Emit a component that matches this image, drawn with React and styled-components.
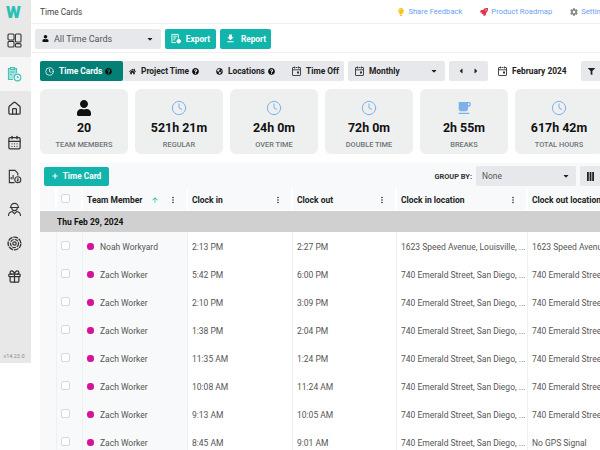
import React from 'react';
import styled, { createGlobalStyle } from 'styled-components';
import { FaUser, FaHome, FaGlobeAmericas, FaQuestionCircle, FaLightbulb, FaRocket, FaCog, FaFilter, FaCaretDown, FaCaretLeft, FaCaretRight, FaPlus } from 'react-icons/fa';
import { MdFreeBreakfast, MdFileDownload, MdMoreVert, MdArrowUpward } from 'react-icons/md';
import { LuClock, LuHouse, LuCalendarDays, LuGift } from 'react-icons/lu';

const GlobalStyle = createGlobalStyle`
  html, body {
    margin: 0;
    width: 600px;
    height: 450px;
    overflow: hidden;
    background: #fff;
    font-family: Roboto, "Liberation Sans", sans-serif;
  }
  * { box-sizing: border-box; }
`;

const Page = styled.div`
  display: flex;
  width: 600px;
  height: 450px;
  overflow: hidden;
  align-items: flex-start;
`;

const Sidebar = styled.aside`
  flex: 0 0 31px;
  height: 363px;
  background: #e8e8e8;
  display: flex;
  flex-direction: column;
`;

const Logo = styled.div`
  height: 24px;
  display: flex;
  align-items: center;
  justify-content: center;
  padding-right: 4px;
  font-size: 17px;
  font-weight: 900;
  color: #2cc0b4;
`;

const NavItem = styled.div`
  height: ${p => p.$h || 33}px;
  display: flex;
  align-items: center;
  justify-content: center;
  padding-right: 3px;
  background: ${p => (p.$active ? '#f6f6f6' : 'transparent')};
  color: #333;
  font-size: 15px;
`;

const Version = styled.div`
  margin-top: auto;
  padding: 0 3px 4px 0;
  text-align: center;
  font-size: 5.5px;
  color: #8a8a8a;
`;

const Main = styled.main`
  flex: 0 0 569px;
  min-width: 0;
  display: flex;
  flex-direction: column;
`;

const Header = styled.header`
  height: 24px;
  display: flex;
  align-items: center;
  padding-left: 9px;
  border-bottom: 1px solid #f0f0f0;
  font-size: 8.3px;
  color: #444;
`;

const HeaderLinks = styled.div`
  margin-left: auto;
  display: flex;
  gap: 18px;
  white-space: nowrap;
  margin-right: -9px;
  font-size: 7.6px;
`;

const HeaderLink = styled.span`
  display: flex;
  align-items: center;
  gap: 3px;
  color: #6b9ff0;
  svg { color: ${p => p.$icon}; font-size: 8px; }
`;

const Toolbar = styled.div`
  height: 29px;
  display: flex;
  align-items: center;
  gap: 4px;
  padding: 1px 0 0 4px;
  border-bottom: 1px solid #f0f0f0;
`;

const Select = styled.div`
  width: ${p => p.$w}px;
  height: 20px;
  flex: none;
  display: flex;
  align-items: center;
  gap: 5px;
  padding: 0 ${p => p.$pad || 7}px;
  background: #e6e8ec;
  border-radius: 2px;
  font-size: ${p => p.$size || 8.4}px;
  color: ${p => p.$color || '#555'};
  font-weight: ${p => p.$weight || 400};
  svg { flex: none; }
`;

const Caret = styled(FaCaretDown)`
  margin-left: auto;
  font-size: 8px;
  color: #222;
`;

const TealButton = styled.button`
  height: ${p => p.$h || 20}px;
  width: ${p => p.$w}px;
  display: flex;
  flex: none;
  align-items: center;
  justify-content: center;
  gap: 5px;
  border: 0;
  padding: 0;
  border-radius: 2px;
  background: #12b5ab;
  color: #fff;
  font-family: inherit;
  font-size: 8.3px;
  font-weight: 700;
`;

const TabRow = styled.div`
  display: flex;
  align-items: center;
  gap: 4px;
  padding: 8px 0 0 9px;
  white-space: nowrap;
`;

const Tabs = styled.div`
  display: flex;
  width: 304px;
  height: 20px;
  flex: none;
  background: #e6e8ec;
  border-radius: 2px;
`;

const Tab = styled.div`
  width: ${p => p.$w}px;
  display: flex;
  align-items: center;
  gap: 5px;
  padding-left: ${p => (p.$active ? 5 : 6)}px;
  background: ${p => (p.$active ? '#047f76' : 'transparent')};
  color: ${p => (p.$active ? '#fff' : '#222')};
  font-size: 8.4px;
  font-weight: 700;
  border-radius: 2px;
`;

const Help = styled(FaQuestionCircle)`
  flex: none;
  margin-left: -2px;
  font-size: 7px;
  color: #111;
`;

const Pager = styled.div`
  width: 39px;
  height: 20px;
  flex: none;
  display: flex;
  align-items: center;
  justify-content: space-around;
  padding: 0 4px;
  background: #e6e8ec;
  border-radius: 2px;
  font-size: 8px;
  color: #222;
`;

const Month = styled.div`
  width: 85px;
  flex: none;
  display: flex;
  align-items: center;
  gap: 5px;
  padding-left: 6px;
  font-size: 8.4px;
  font-weight: 700;
  color: #222;
`;

const Cards = styled.div`
  display: flex;
  gap: 7px;
  padding: 8px 0 0 9px;
`;

const Card = styled.div`
  flex: 0 0 88px;
  height: 65px;
  display: flex;
  flex-direction: column;
  align-items: center;
  padding-top: 10px;
  background: #eeefef;
  border-radius: 6px;
`;

const CardIcon = styled.div`
  height: 17px;
  display: flex;
  align-items: center;
  font-size: 16px;
  color: ${p => p.$color || '#7fb0ea'};
`;

const CardValue = styled.div`
  margin-top: 4px;
  font-size: 12.4px;
  line-height: 15px;
  font-weight: 700;
  color: #111;
  white-space: nowrap;
`;

const CardLabel = styled.div`
  margin-top: 5px;
  font-size: 7.4px;
  line-height: 9px;
  font-weight: 500;
  color: #6f747a;
`;

const TableWrap = styled.section`
  margin: 9px 0 0 9px;
  width: 600px;
`;

const TableBar = styled.div`
  height: 26px;
  display: flex;
  align-items: center;
  padding-left: 4px;
  background: #f8f9fa;
`;

const GroupBy = styled.div`
  margin-left: auto;
  display: flex;
  align-items: center;
  gap: 4px;
  font-size: 7.4px;
  font-weight: 700;
  color: #333;
  padding-right: 30px;
`;

const COLUMNS = '17px 26px 105px 105px 104px 131px 112px';

const Row = styled.div`
  display: grid;
  grid-template-columns: ${COLUMNS};
  height: ${p => p.$h || 28}px;
`;

const Cell = styled.div`
  display: flex;
  align-items: center;
  padding: 1px 5px 0 4px;
  min-width: 0;
  overflow: hidden;
  white-space: nowrap;
  font-size: 8.5px;
  color: #555;
  background: ${p => (p.$pinned ? '#f8f9fa' : '#fff')};
  border-right: ${p => (p.$line ? '1px solid #eef0f2' : 'none')};
`;

const HeadCell = styled(Cell)`
  padding: 1px 8px 0 4px;
  font-weight: 700;
  color: #222;
  background: #f8f9fa;
  border-right: 2px solid #fff;
  svg:last-child { margin-left: auto; font-size: 10px; color: #222; }
`;

const Sort = styled(MdArrowUpward)`
  margin-left: 9px;
  font-size: 8px;
  color: #12b5ab;
`;

const GroupRow = styled.div`
  height: 21px;
  margin-top: 1px;
  display: flex;
  align-items: center;
  padding-left: 17px;
  background: #d0d0d0;
  font-size: 8.5px;
  font-weight: 700;
  color: #111;
`;

const Checkbox = styled.span`
  width: 9px;
  height: 9px;
  margin: -3px 0 0 0;
  border: 1px solid #d8d8d8;
  border-radius: 2px;
  background: #fff;
`;

const Dot = styled.span`
  flex: none;
  width: 6.5px;
  height: 6.5px;
  margin-right: 6.5px;
  border-radius: 50%;
  background: #d6129a;
`;

const LOC_A = '1623 Speed Avenue, Louisville, ...';
const LOC_B = '740 Emerald Street, San Diego, ...';

const rows = [
  ['Noah Workyard', '2:13 PM', '2:27 PM', LOC_A, LOC_A],
  ['Zach Worker', '5:42 PM', '6:00 PM', LOC_B, LOC_B],
  ['Zach Worker', '2:10 PM', '3:09 PM', LOC_B, LOC_B],
  ['Zach Worker', '1:38 PM', '2:04 PM', LOC_B, LOC_B],
  ['Zach Worker', '11:35 AM', '1:24 PM', LOC_B, LOC_B],
  ['Zach Worker', '10:08 AM', '11:24 AM', LOC_B, LOC_B],
  ['Zach Worker', '9:13 AM', '10:05 AM', LOC_B, LOC_B],
  ['Zach Worker', '8:45 AM', '9:01 AM', LOC_B, 'No GPS Signal'],
];

const stats = [
  { value: '20', label: 'TEAM MEMBERS', icon: <FaUser />, color: '#111' },
  { value: '521h 21m', label: 'REGULAR', icon: <LuClock strokeWidth={1.5} /> },
  { value: '24h 0m', label: 'OVER TIME', icon: <LuClock strokeWidth={1.5} /> },
  { value: '72h 0m', label: 'DOUBLE TIME', icon: <LuClock strokeWidth={1.5} /> },
  { value: '2h 55m', label: 'BREAKS', icon: <MdFreeBreakfast /> },
  { value: '617h 42m', label: 'TOTAL HOURS', icon: <LuClock strokeWidth={1.5} /> },
];

const DashboardIcon = () => (
  <svg width="15" height="15" viewBox="0 0 15 15" fill="none" stroke="#333" strokeWidth="1.1">
    <rect x="1" y="1" width="6" height="6" rx="1" />
    <rect x="1" y="8.4" width="6" height="5.6" rx="1" />
    <rect x="8.4" y="1" width="5.6" height="8" rx="1" />
    <rect x="8.4" y="10.6" width="5.6" height="3.4" rx="1" />
  </svg>
);

// small worker with a hard hat
const WorkerIcon = () => (
  <svg width="15" height="15" viewBox="0 0 16 16" fill="none" stroke="#333" strokeWidth="1.2">
    <path d="M4 5.4a4 4 0 0 1 8 0M3 5.8h10M5 6.2c0 4 6 4 6 0M1.6 15c0-3 2.2-4.6 4-4.8L8 12.5l2.4-2.3c1.8.2 4 1.8 4 4.8" />
  </svg>
);

const TargetIcon = () => (
  <svg width="15" height="15" viewBox="0 0 16 16" fill="none" stroke="#333">
    <circle cx="8" cy="8" r="6.8" strokeWidth="1.5" strokeDasharray="5 1" />
    <circle cx="8" cy="8" r="4.3" strokeWidth="1.3" strokeDasharray="4 1" />
    <circle cx="8" cy="8" r="1.8" strokeWidth="1.3" />
  </svg>
);

const ClipboardClockIcon = () => (
  <svg width="16" height="16" viewBox="0 0 16 16" fill="#a9e3de" stroke="#45c4ba" strokeWidth="1.2">
    <path d="M7 13.5H2.5v-11h8V7" />
    <path d="M4.5 1.5h4v2h-4z" />
    <path d="M4 6h5M4 8.5h2" fill="none" />
    <circle cx="11.5" cy="11.5" r="3.3" fill="#f6f6f6" />
    <path d="M11.5 10v1.6h1.4" fill="none" />
  </svg>
);

const ExpenseIcon = () => (
  <svg width="15" height="15" viewBox="0 0 16 16" fill="none" stroke="#333" strokeWidth="1.2">
    <path d="M8 14.5H2.5V1.5h6l3 3V7" />
    <path d="M4.5 11V8.5M6.5 11V6.5" />
    <circle cx="11.5" cy="11.5" r="3.2" />
    <path d="M11.5 9.8v3.4M10.5 12.4h1.5M11 10.6h1.5" />
  </svg>
);

const ExportIcon = () => (
  <svg width="10" height="11" viewBox="0 0 11 12" fill="none" stroke="#fff" strokeWidth="1">
    <path d="M5.5 10.5H1V1.5h7V6" />
    <path d="M2.5 3.5h4M2.5 5.5h3M2.5 7.5h2" />
    <circle cx="8.5" cy="9" r="2" fill="#fff" />
  </svg>
);

const CalendarIcon = () => (
  <svg width="9" height="10" viewBox="0 0 9 10" fill="none" stroke="#333" strokeWidth="0.9">
    <path d="M2.5 1.5H1a.5.5 0 0 0-.5.5v7a.5.5 0 0 0 .5.5h7a.5.5 0 0 0 .5-.5V2a.5.5 0 0 0-.5-.5H6.5M2.5.5v2M6.5.5v2M3.5 1.5h2M.5 3.8h8" />
    <rect x="5" y="5.5" width="2" height="2" fill="#333" stroke="none" />
  </svg>
);

const ColumnsIcon = () => (
  <svg width="7" height="9" viewBox="0 0 7 9" fill="#222">
    <rect x="0" y="0" width="1.8" height="9" />
    <rect x="2.6" y="0" width="1.8" height="9" />
    <rect x="5.2" y="0" width="1.8" height="9" />
  </svg>
);

const App = () => {
  return (
    <Page>
      <GlobalStyle />
      <Sidebar>
        <Logo>W</Logo>
        <NavItem><DashboardIcon /></NavItem>
        <NavItem $h={34} $active><ClipboardClockIcon /></NavItem>
        <NavItem $h={34}><LuHouse /></NavItem>
        <NavItem $h={34}><LuCalendarDays /></NavItem>
        <NavItem $h={34}><ExpenseIcon /></NavItem>
        <NavItem><WorkerIcon /></NavItem>
        <NavItem $h={34}><TargetIcon /></NavItem>
        <NavItem><LuGift /></NavItem>
        <Version>v14.23.0</Version>
      </Sidebar>
      <Main>
        <Header>
          Time Cards
          <HeaderLinks>
            <HeaderLink $icon="#f5c518"><FaLightbulb />Share Feedback</HeaderLink>
            <HeaderLink $icon="#e0364f"><FaRocket />Product Roadmap</HeaderLink>
            <HeaderLink $icon="#888"><FaCog />Settings</HeaderLink>
          </HeaderLinks>
        </Header>
        <Toolbar>
          <Select $w={126} $size={9}><FaUser size={7} color="#111" />All Time Cards<Caret /></Select>
          <TealButton $w={51}><ExportIcon />Export</TealButton>
          <TealButton $w={51}><MdFileDownload size={11} />Report</TealButton>
        </Toolbar>
        <TabRow>
          <Tabs>
            <Tab $active $w={83}><LuClock size={9} />Time Cards<Help /></Tab>
            <Tab $w={87}><FaHome size={7} />Project Time<Help /></Tab>
            <Tab $w={76}><FaGlobeAmericas size={7} />Locations<Help /></Tab>
            <Tab $w={58}><CalendarIcon />Time Off</Tab>
          </Tabs>
          <Select $w={97} $color="#222" $weight={700}><CalendarIcon />Monthly<Caret /></Select>
          <Pager><FaCaretLeft /><FaCaretRight /></Pager>
          <Month><CalendarIcon />February 2024</Month>
          <Select $w={60} $color="#222" $weight={700}><FaFilter size={7} />Filter</Select>
        </TabRow>
        <Cards>
          {stats.map(stat => (
            <Card key={stat.label}>
              <CardIcon $color={stat.color}>{stat.icon}</CardIcon>
              <CardValue>{stat.value}</CardValue>
              <CardLabel>{stat.label}</CardLabel>
            </Card>
          ))}
        </Cards>
        <TableWrap>
          <TableBar>
            <TealButton $w={65} $h={19}><FaPlus size={6} />Time Card</TealButton>
            <GroupBy>
              GROUP BY:
              <Select $w={100} $pad={6}>None<Caret /></Select>
              <Select $w={30}><ColumnsIcon /></Select>
            </GroupBy>
          </TableBar>
          <Row $h={21}>
            <HeadCell />
            <HeadCell><Checkbox /></HeadCell>
            <HeadCell>Team Member<Sort /><MdMoreVert /></HeadCell>
            <HeadCell>Clock in<MdMoreVert /></HeadCell>
            <HeadCell>Clock out<MdMoreVert /></HeadCell>
            <HeadCell>Clock in location<MdMoreVert /></HeadCell>
            <HeadCell>Clock out location</HeadCell>
          </Row>
          <GroupRow>Thu Feb 29, 2024</GroupRow>
          {rows.map((row, i) => (
            <Row key={i}>
              <Cell $pinned $line />
              <Cell $pinned $line><Checkbox /></Cell>
              <Cell $pinned $line><Dot />{row[0]}</Cell>
              <Cell $line>{row[1]}</Cell>
              <Cell $line>{row[2]}</Cell>
              <Cell $line>{row[3]}</Cell>
              <Cell>{row[4]}</Cell>
            </Row>
          ))}
        </TableWrap>
      </Main>
    </Page>
  );
};

export default App;
